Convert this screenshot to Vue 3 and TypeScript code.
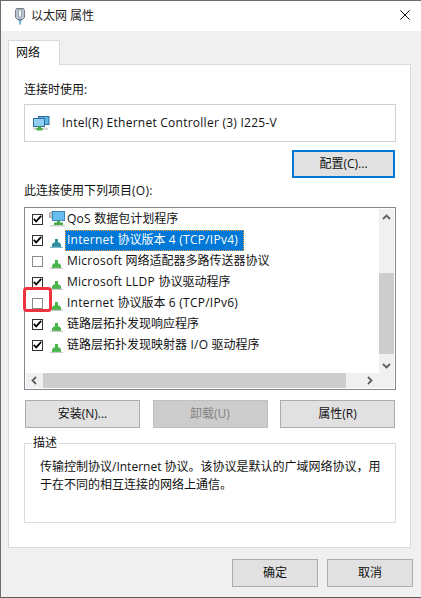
<script setup lang="ts">
interface Item {
  label: string
  checked: boolean
  selected?: boolean
  kind: 'service' | 'proto'
}
const items: Item[] = [
  { label: 'QoS 数据包计划程序', checked: true, kind: 'service' },
  { label: 'Internet 协议版本 4 (TCP/IPv4)', checked: true, selected: true, kind: 'proto' },
  { label: 'Microsoft 网络适配器多路传送器协议', checked: false, kind: 'proto' },
  { label: 'Microsoft LLDP 协议驱动程序', checked: true, kind: 'proto' },
  { label: 'Internet 协议版本 6 (TCP/IPv6)', checked: false, kind: 'proto' },
  { label: '链路层拓扑发现响应程序', checked: true, kind: 'proto' },
  { label: '链路层拓扑发现映射器 I/O 驱动程序', checked: true, kind: 'proto' }
]
// Latin runs get a little tracking, the reference's hinted UI font sets them wider.
function runs(text: string): { text: string; latin: boolean }[] {
  return text
    .split(/([\x20-\x7e]+)/)
    .filter((part) => part.length > 0)
    .map((part) => ({ text: part, latin: /^[\x20-\x7e]/.test(part) }))
}
</script>

<template>
  <div class="win">
    <header class="title">
      <svg class="plug" width="12" height="18" viewBox="0 0 12 18">
        <path d="M2.5 1.5 h7 l1 2 v7 l-2 2 h-5 l-2-2 v-7z" fill="#b9c5d0" stroke="#6f7c88" />
        <rect x="4.5" y="3" width="3" height="7" fill="#f4f7f9" stroke="#8d99a4" stroke-width=".8" />
        <path d="M4.5 12.5 h3 v2 h-3z" fill="#6a8ca8" />
        <path d="M5.5 14.5 h1.4 v3 h-1.4z" fill="#29a3d8" />
      </svg>
      <span class="title-text">以太网 属性</span>
      <svg class="close" width="10" height="10" viewBox="0 0 10 10">
        <path d="M.3 .3 L9.7 9.7 M9.7 .3 L.3 9.7" stroke="#111" stroke-width="1" fill="none" />
      </svg>
    </header>

    <main class="body">
      <div class="tab">网络</div>
      <section class="panel">
        <div class="label first">连接时使用:</div>
        <div class="adapter">
          <svg width="17" height="15" viewBox="0 0 17 15">
            <rect x="5.5" y=".5" width="10.5" height="8" fill="#5eb5e6" stroke="#2d6f9c" />
            <rect x=".5" y="2.5" width="11" height="8" fill="#8fd0f2" stroke="#2d6f9c" />
            <rect x="0" y="11.5" width="15" height="2.5" fill="#d8d8d8" />
            <path d="M5 10.5 h3 v1.5 h2 l-1 2.5 h-5 l-1-2.5 h2z" fill="#46ad46" />
          </svg>
          <span><span v-for="(r, i) in runs('Intel(R) Ethernet Controller (3) I225-V')" :key="i" :class="{ latin: r.latin }">{{ r.text }}</span></span>
        </div>
        <div class="config-row">
          <button class="btn focus">配置(C)...</button>
        </div>
        <div class="label second"><span v-for="(r, i) in runs('此连接使用下列项目(O):')" :key="i" :class="{ latin: r.latin }">{{ r.text }}</span></div>

        <div class="list">
          <div class="list-top">
            <ul class="rows">
              <li v-for="item in items" :key="item.label" class="row">
                <span class="check">
                  <svg v-if="item.checked" width="9" height="8" viewBox="0 0 9 8">
                    <path d="M.8 3.8 L3.2 6.4 L8.2 .9" fill="none" stroke="#000" stroke-width="1.7" />
                  </svg>
                </span>
                <svg v-if="item.kind === 'service'" class="ico service" width="16" height="16" viewBox="0 0 16 16">
                  <circle cx="3" cy="4" r="3" fill="#c8c8c8" stroke="#9a9a9a" />
                  <rect x="3.5" y=".5" width="12" height="9" fill="#67bdf0" stroke="#3d86b8" />
                  <path d="M8 9.5 h3 v2 h3 v2.5 h-9 v-2.5 h3z" fill="#4aa84a" />
                  <rect x="1" y="14" width="15" height="1.5" fill="#d0d0d0" />
                </svg>
                <svg v-else class="ico" width="13" height="9" viewBox="0 0 13 9">
                  <path d="M5 0 h3 v3.5 h1.5 l1.5 2 v2.5 h-9 v-2.5 l1.5-2 h1.500z" :fill="item.selected ? '#2f8f9e' : '#49b649'" />
                  <rect x="0" y="7.800" width="13" height="1.200" :fill="item.selected ? '#7fb8c4' : '#c9c9c9'" />
                </svg>
                <span class="row-text" :class="{ selected: item.selected }"><span v-for="(r, i) in runs(item.label)" :key="i" :class="{ latin: r.latin }">{{ r.text }}</span></span>
              </li>
            </ul>
            <div class="vbar">
              <svg class="arrow" width="9" height="6" viewBox="0 0 9 6"><path d="M1 5 L4.5 1.500 L8 5" fill="none" stroke="#606060" stroke-width="1.800" /></svg>
              <div class="vtrack"><div class="vthumb"></div></div>
              <svg class="arrow down" width="9" height="6" viewBox="0 0 9 6"><path d="M1 1 L4.5 4.5 L8 1" fill="none" stroke="#606060" stroke-width="1.800" /></svg>
            </div>
          </div>
          <div class="hbar">
            <svg class="arrow" width="6" height="9" viewBox="0 0 6 9"><path d="M5 1 L1.500 4.5 L5 8" fill="none" stroke="#606060" stroke-width="1.800" /></svg>
            <div class="hthumb"></div>
            <svg class="arrow" width="6" height="9" viewBox="0 0 6 9"><path d="M1 1 L4.5 4.5 L1 8" fill="none" stroke="#606060" stroke-width="1.800" /></svg>
          </div>
        </div>

        <div class="actions">
          <button class="btn">安装(N)...</button>
          <button class="btn disabled">卸载(U)</button>
          <button class="btn">属性(R)</button>
        </div>

        <fieldset class="desc">
          <legend>描述</legend>
          <p>传输控制协议/Internet 协议。该协议是默认的广域网络协议，用于在不同的相互连接的网络上通信。</p>
        </fieldset>
      </section>

      <footer class="foot">
        <button class="btn foot-btn">确定</button>
        <button class="btn foot-btn">取消</button>
      </footer>
    </main>

    <div class="marker"></div>
  </div>
</template>

<style>
html, body { margin: 0; background: #f0f0f0; }
</style>

<style scoped>
.win {
  position: relative;
  width: 421px;
  height: 598px;
  box-sizing: border-box;
  border-left: 1px solid #6d6d6d;
  border-top: 1px solid #6d6d6d;
  border-bottom: 1px solid #5a5a5a;
  display: flex;
  flex-direction: column;
  font: 12px/16px "Open Sans", "Noto Sans CJK SC", sans-serif;
  color: #111;
  overflow: hidden;
}
.latin { letter-spacing: 0.25px; }
.title {
  height: 30px;
  flex: none;
  background: #fff;
  display: flex;
  align-items: center;
  padding: 0 0 0 13px;
}
.plug { margin-right: 5px; }
.title-text { font-size: 12px; color: #222; }
.close { margin-left: auto; margin-right: 11px; margin-bottom: 2px; }
.body {
  flex: 1;
  background: #f0f0f0;
  padding: 9px 10px 0 7px;
  display: flex;
  flex-direction: column;
}
.tab {
  align-self: flex-start;
  box-sizing: border-box;
  width: 52px;
  height: 25px;
  background: #fff;
  border: 1px solid #d9d9d9;
  border-bottom: 0;
  padding: 4px 0 0 7px;
  position: relative;
  z-index: 1;
  margin-bottom: -1px;
}
.panel {
  box-sizing: border-box;
  height: 484px;
  background: #fff;
  border: 1px solid #d9d9d9;
  padding: 0 14px 0 15px;
  display: flex;
  flex-direction: column;
}
.label { height: 16px; }
.first { margin-top: 17px; }
.adapter {
  box-sizing: border-box;
  height: 38px;
  margin-top: 6px;
  border: 1px solid #cfcfcf;
  display: flex;
  align-items: center;
  padding-left: 8px;
  gap: 12px;
}
.config-row {
  display: flex;
  justify-content: flex-end;
  margin-top: 8px;
  padding-right: 1px;
}
.btn {
  box-sizing: border-box;
  height: 28px;
  background: #e1e1e1;
  border: 1px solid #adadad;
  font: inherit;
  color: #111;
  padding: 0;
}
.focus {
  width: 103px;
  border: 2px solid #0078d7;
}
.second { margin-top: 5px; }
.list {
  box-sizing: border-box;
  height: 183px;
  margin-top: 8px;
  border: 1px solid #828790;
  padding: 1px;
  display: flex;
  flex-direction: column;
}
.list-top { flex: 1; display: flex; min-height: 0; }
.rows {
  list-style: none;
  margin: 0;
  padding: 0;
  flex: 1;
  background: #fff;
}
.row {
  height: 21px;
  display: flex;
  align-items: center;
  padding-left: 6px;
  position: relative;
}
.check {
  box-sizing: border-box;
  width: 11px;
  height: 11px;
  margin-top: -1px;
  border: 1px solid #333;
  background: #fff;
  display: flex;
  align-items: center;
  justify-content: center;
  flex: none;
}
.check svg { flex: none; }
.row:nth-child(3) .check, .row:nth-child(5) .check { border-color: #8a8a8a; }
.ico {
  position: absolute;
  left: 24px;
  top: 9px;
}
.ico.service { top: 2px; left: 23px; }
.row-text { position: absolute; left: 39px; top: 2px; padding: 0 2px; white-space: nowrap; }
.row-text.selected {
  top: 0;
  left: 39px;
  height: 21px;
  width: 179px;
  box-sizing: border-box;
  padding: 2px 0 0 2px;
  background: #0078d7;
  color: #fff;
  outline: 1px dotted #f0a040;
  outline-offset: -1px;
}
.vbar {
  width: 15px;
  background: #f0f0f0;
  display: flex;
  flex-direction: column;
  align-items: center;
}
.vbar .arrow { flex: none; margin: 5px 0; }
.vbar .arrow.down { margin: 6px 0 4px; }
.vtrack { flex: 1; width: 100%; padding-top: 48px; }
.vthumb { height: 81px; background: #cdcdcd; }
.hbar {
  height: 15px;
  flex: none;
  background: #f0f0f0;
  display: flex;
  align-items: center;
  padding: 0 21px 0 5px;
}
.hthumb {
  align-self: stretch;
  width: 303px;
  margin: 0 auto 0 6px;
  background: #cdcdcd;
}
.actions {
  display: flex;
  justify-content: space-between;
  margin-top: 10px;
  padding: 0 1px;
}
.actions .btn { width: 115px; }
.disabled { background: #ccc; border-color: #bfbfbf; color: #838383; }
.desc {
  box-sizing: border-box;
  height: 87px;
  margin: 8px 0 0;
  padding: 0 14px 0 15px;
  border: 1px solid #dcdcdc;
  min-width: 0;
}
.desc legend { padding: 0 1px; margin-left: -8px; line-height: 14px; }
.desc p { margin: 8px 0 0; line-height: 18px; }
.foot {
  display: flex;
  justify-content: flex-end;
  gap: 9px;
  margin-top: 11px;
  margin-right: -2px;
}
.foot-btn { width: 86px; }
.marker {
  position: absolute;
  left: 22px;
  top: 286px;
  width: 29px;
  height: 25px;
  box-sizing: border-box;
  border: 3px solid #ee3340;
  border-radius: 4px;
}
</style>
